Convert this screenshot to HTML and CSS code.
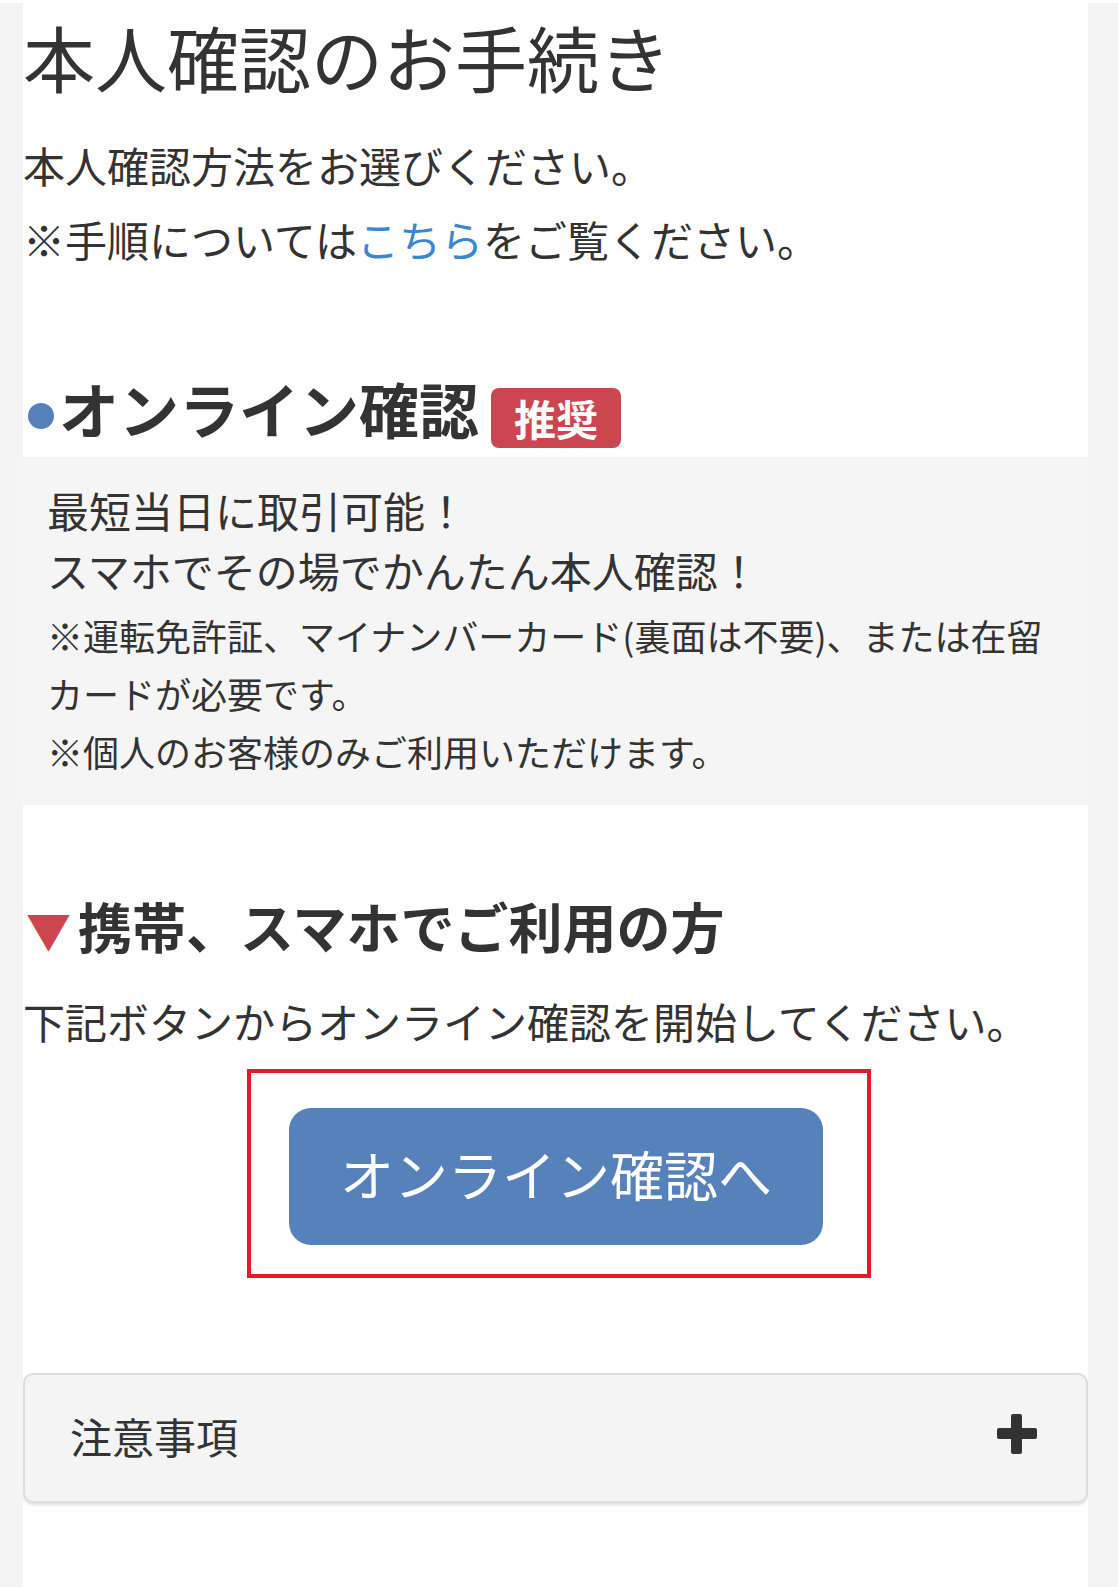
FILE: index.html
```html
<!DOCTYPE html>
<html lang="ja">
<head>
    <meta charset="UTF-8">
    <meta name="viewport" content="width=device-width, initial-scale=1.0">
    <title>本人確認のお手続き</title>
    <link rel="stylesheet" href="styles.css">
</head>

<body>
    <main class="page">
        <h1 class="title">本人確認のお手続き</h1>
        <p class="lead">本人確認方法をお選びください。<br>※手順については<a href="#">こちら</a>をご覧ください。</p>

        <h2 class="sec-head">
            <span class="dot"></span>
            <span class="sec-text">オンライン確認</span>
            <span class="badge">推奨</span>
        </h2>
        <section class="online-box">
            <p class="big">最短当日に取引可能！<br>スマホでその場でかんたん本人確認！</p>
            <p class="note">※運転免許証、マイナンバーカード(裏面は不要)、または在留<br>カードが必要です。<br>※個人のお客様のみご利用いただけます。</p>
        </section>

        <h3 class="sub-head"><span class="tri">▼</span>携帯、スマホでご利用の方</h3>
        <p class="guide">下記ボタンからオンライン確認を開始してください。</p>
        <div class="btn-wrap">
            <div class="btn-frame">
                <a class="btn" href="#">オンライン確認へ</a>
            </div>
        </div>

        <!-- 注意事項 -->
        <div class="acc">
            <span class="acc-title">注意事項</span>
            <svg class="acc-icon" width="40" height="40" viewBox="0 0 40 40">
                <rect x="14" y="0" width="11" height="40" rx="2"></rect>
                <rect x="0" y="14" width="40" height="11" rx="2"></rect>
            </svg>
        </div>
    </main>
</body>
</html>
```

FILE: styles.css
```css
body {
    margin: 0;
    padding: 0;
    background-color: #f4f4f4;
    border-top: 3px solid #fff;
    font-family: "Noto Sans CJK JP", "Noto Sans", sans-serif;
    color: #333;
}

.page {
    width: 1065px;
    margin-left: 23px;
    background-color: #fff;
    min-height: 1584px;
    overflow: hidden;
}

.title {
    font-size: 72px;
    font-weight: normal;
    line-height: 86px;
    margin: 0;
    padding-top: 10px;
}

.lead {
    font-size: 42px;
    line-height: 74px;
    margin: 29px 0 0;
}

.lead a {
    color: #3b87d1;
    text-decoration: none;
}

/* オンライン確認 見出し */
.sec-head {
    display: flex;
    align-items: flex-start;
    height: 72px;
    margin: 96px 0 0;
    font-size: 60px;
    font-weight: bold;
    line-height: 72px;
}

.dot {
    width: 26px;
    height: 26px;
    border-radius: 50%;
    background-color: #5581bb;
    margin: 31px 5px 0 5px;
}

.badge {
    margin: 16px 0 0 12px;
    height: 60px;
    line-height: 60px;
    padding: 0 23px;
    font-size: 42px;
    color: #fff;
    background-color: #cc4650;
    border-radius: 8px;
}

.online-box {
    background-color: #f5f5f5;
    margin-top: 13px;
    padding: 23px 24px 25px;
}

.big {
    font-size: 42px;
    line-height: 60px;
    margin: 0;
}

.note {
    font-size: 36px;
    line-height: 58px;
    margin: 6px 0 0;
}

.sub-head {
    font-size: 54px;
    font-weight: bold;
    line-height: 64px;
    height: 64px;
    margin: 89px 0 0;
}

.tri {
    color: #cc4650;
    font-size: 45px;
    line-height: 1;
    margin: 0 7px 0 3px;
}

.guide {
    font-size: 42px;
    line-height: 74px;
    margin: 26px 0 0;
}

.btn-wrap {
    display: flex;
    justify-content: center;
    padding-left: 7px;
    margin-top: 11px;
}

.btn-frame {
    border: 4px solid #e8182a;
    padding: 35px 44px 29px 38px;
}

.btn {
    display: block;
    width: 534px;
    height: 137px;
    line-height: 131px;
    text-align: center;
    font-size: 54px;
    color: #fff;
    background-color: #5681bb;
    border-radius: 22px;
    text-decoration: none;
}

.acc {
    margin-top: 95px;
    height: 126px;
    border: 2px solid #ddd;
    border-radius: 10px;
    background-color: #f4f4f4;
    box-shadow: 0 2px 3px rgba(0, 0, 0, 0.12);
    display: flex;
    justify-content: space-between;
    align-items: center;
    padding: 0 49px 0 45px;
}

.acc-title {
    font-size: 42px;
    margin-bottom: 6px;
}

.acc-icon {
    fill: #333;
    margin-bottom: 9px;
}
```
